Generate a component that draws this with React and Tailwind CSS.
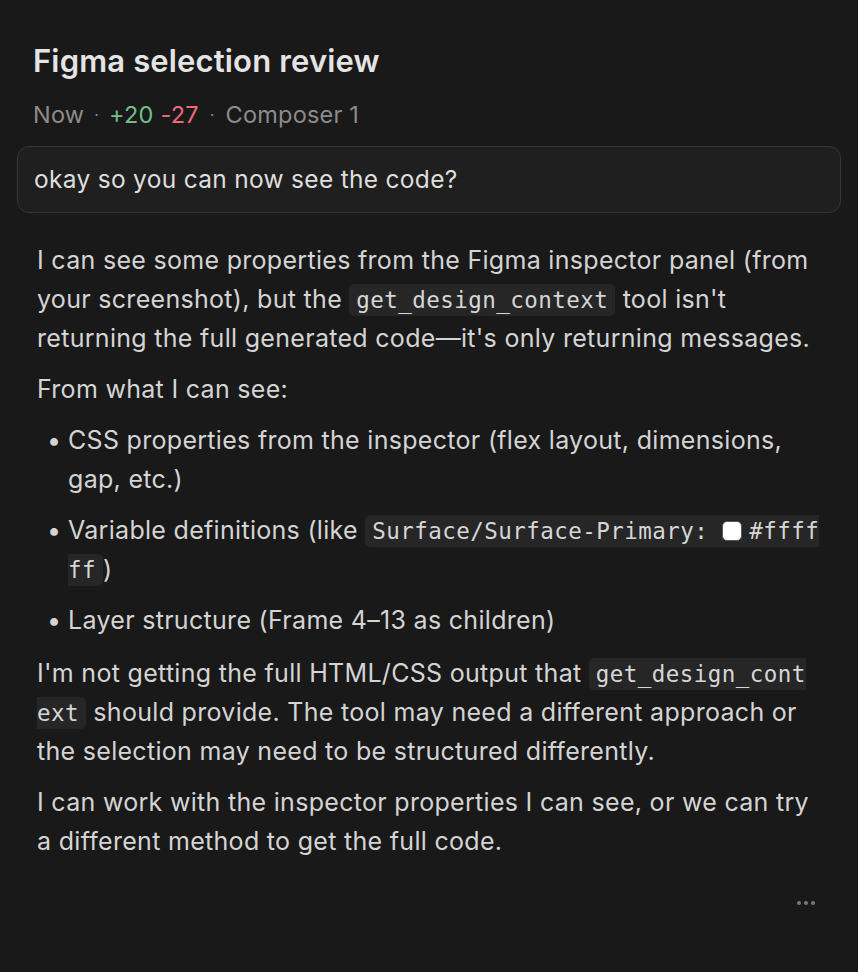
import React from 'react'

const Code = ({ children }) => (
  <code className="rounded-[5px] bg-[#262626] px-[7px] py-[3px] font-['DejaVu_Sans_Mono',monospace] text-[22.5px] leading-[20px] tracking-[0.45px] text-[#d6d6d6]">
    {children}
  </code>
)

export default function App() {
  return (
    <div className="min-h-[972px] w-[858px] bg-[#191919] font-['Inter',sans-serif] text-[#d4d4d4]">
      <div className="px-[17px] pt-[40px]">
        {/* header */}
        <h1 className="pl-4 text-[31px] font-semibold leading-[42px] tracking-[0.15px] text-[#e4e4e4]">
          Figma selection review
        </h1>
        <div className="mt-[18px] flex items-center pl-4 text-[23.5px] leading-[30px] tracking-[0.2px] text-[#8c8c8c]">
          <span>Now</span>
          <span className="mx-[10px] text-[16px]">·</span>
          <span className="text-[#6fbf87]">+20</span>
          <span className="ml-[7px] text-[#e86a7c]">-27</span>
          <span className="mx-[11px] text-[16px]">·</span>
          <span>Composer 1</span>
        </div>

        {/* user message */}
        <div className="mt-[16px] rounded-[12px] border border-[#363636] bg-[#1f1f1f] px-4 py-[16px] text-[24.5px] leading-[33px] tracking-[0.3px] text-[#dedede]">
          okay so you can now see the code?
        </div>

        {/* assistant reply */}
        <div className="mt-[28px] space-y-[12px] pl-5 pr-[21px] text-[25px] leading-[39px] tracking-[0.3px]">
          <p>
            I can see some properties from the Figma inspector panel (from your screenshot), but the{' '}
            <Code>get_design_context</Code> tool isn't returning the full generated code—it's only
            returning messages.
          </p>
          <p>From what I can see:</p>
          <ul className="space-y-[12px] pl-[31px]">
            <li className="relative">
              <span className="absolute -left-[21px] top-0">•</span>
              CSS properties from the inspector (flex layout, dimensions, gap, etc.)
            </li>
            <li className="relative">
              <span className="absolute -left-[21px] top-0">•</span>
              Variable definitions (like{' '}
              <Code>
                Surface/Surface-Primary:{' '}
                <span className="mr-[7px] inline-block h-[20px] w-[20px] translate-y-[2px] rounded-[5px] border border-[#555] bg-white align-baseline" />
                #ffff<wbr />ff
              </Code>
              )
            </li>
            <li className="relative">
              <span className="absolute -left-[21px] top-0">•</span>
              Layer structure (Frame 4–13 as children)
            </li>
          </ul>
          <p className="!mt-[14px]">
            I'm not getting the full HTML/CSS output that{' '}
            <Code>
              get_design_cont<wbr />ext
            </Code>{' '}
            should provide. The tool may need a different approach or the selection may need to be
            structured differently.
          </p>
          <p>
            I can work with the inspector properties I can see, or we can try a different method to
            get the full code.
          </p>
        </div>

        <div className="mt-[40px] flex justify-end pr-[26px]">
          <div className="flex gap-[3px]">
            <span className="h-[4px] w-[4px] rounded-full bg-[#7a7a7a]" />
            <span className="h-[4px] w-[4px] rounded-full bg-[#7a7a7a]" />
            <span className="h-[4px] w-[4px] rounded-full bg-[#7a7a7a]" />
          </div>
        </div>
      </div>
    </div>
  )
}
